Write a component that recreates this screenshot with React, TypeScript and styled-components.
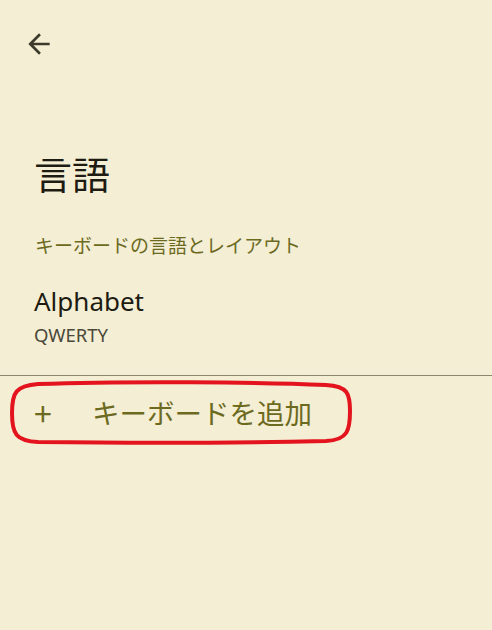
import * as React from "react";
import styled, { createGlobalStyle } from "styled-components";

const GlobalStyle = createGlobalStyle`
  html, body {
    margin: 0;
    padding: 0;
    background: #f4eed4;
  }
  body {
    font-family: "Noto Sans", "Noto Sans CJK JP", sans-serif;
  }
`;

export default function App() {
  return (
    <Page>
      <GlobalStyle />
      <TopBar>
        <BackButton aria-label="戻る">
          <svg width="32" height="32" viewBox="0 0 24 24">
            <path d="M20 11H7.83l5.59-5.59L12 4l-8 8 8 8 1.41-1.41L7.83 13H20v-2z" fill="#3c3a2c" />
          </svg>
        </BackButton>
      </TopBar>
      <Title>言語</Title>
      <SectionLabel>キーボードの言語とレイアウト</SectionLabel>
      <ListItem>
        <ItemTitle>Alphabet</ItemTitle>
        <ItemSub>QWERTY</ItemSub>
      </ListItem>
      <Divider />
      <AddRow>
        <PlusSign>+</PlusSign>
        <AddText>キーボードを追加</AddText>
        <Highlight viewBox="0 0 346 66" width="346" height="66">
          <path
            d="M30 4 C 120 1, 250 2, 318 5 C 340 6, 342 14, 342 31 C 342 50, 340 60, 318 61 C 230 63, 110 63, 30 62 C 8 61, 4 54, 4 33 C 4 12, 8 6, 30 4 Z"
            fill="none"
            stroke="#e3141d"
            strokeWidth="4"
          />
        </Highlight>
      </AddRow>
    </Page>
  );
}

const Page = styled.div`
  width: 492px;
  min-height: 630px;
  background: #f4eed4;
  display: flex;
  flex-direction: column;
`;

const TopBar = styled.div`
  height: 88px;
  display: flex;
  align-items: flex-start;
  padding: 28px 0 0 23px;
  box-sizing: border-box;
`;

const BackButton = styled.div`
  width: 32px;
  height: 32px;
  display: flex;
`;

const Title = styled.h1`
  margin: 66px 0 0 34px;
  font-family: "Noto Sans CJK JP", sans-serif;
  font-weight: 400;
  font-size: 38px;
  line-height: 38px;
  color: #1e1c12;
`;

const SectionLabel = styled.div`
  margin: 43px 0 0 35px;
  font-family: "Noto Sans CJK JP", sans-serif;
  font-size: 19px;
  line-height: 19px;
  color: #6c6a1f;
`;

const ListItem = styled.div`
  display: flex;
  flex-direction: column;
  padding: 32px 0 29px 34px;
`;

const ItemTitle = styled.div`
  font-size: 26px;
  line-height: 30px;
  color: #1e1c12;
`;

const ItemSub = styled.div`
  margin-top: 8px;
  font-size: 18.5px;
  line-height: 22px;
  color: #4a4838;
`;

const Divider = styled.div`
  height: 1px;
  background: #8a8670;
`;

const AddRow = styled.div`
  position: relative;
  display: flex;
  align-items: center;
  height: 72px;
  padding-left: 34px;
  font-family: "Noto Sans CJK JP", sans-serif;
  color: #6c6a1f;
`;

const PlusSign = styled.span`
  width: 58px;
  font-size: 32px;
  line-height: 28px;
`;

const AddText = styled.span`
  font-size: 27.5px;
  line-height: 28px;
`;

const Highlight = styled.svg`
  position: absolute;
  left: 8px;
  top: 4px;
  pointer-events: none;
`;
